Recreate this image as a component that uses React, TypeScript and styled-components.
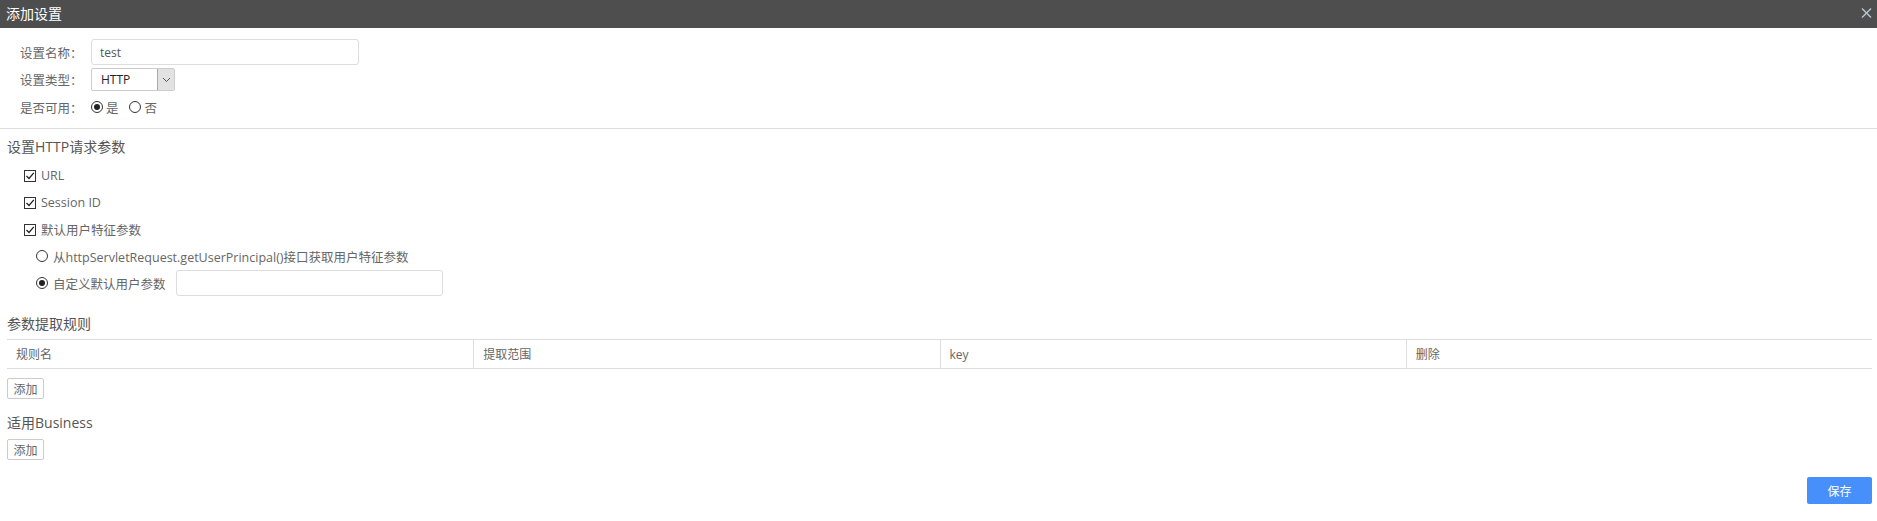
import React from "react";
import styled, { createGlobalStyle } from "styled-components";

const Global = createGlobalStyle`
  html, body { margin: 0; padding: 0; background: #fff; }
  body { font-family: "Open Sans", "Noto Sans CJK SC", sans-serif; font-size: 12px; color: #666; }
  * { box-sizing: border-box; }
`;

const Header = styled.div`
  height: 28px;
  background: #4e4e4e;
  display: flex;
  align-items: center;
  justify-content: space-between;
  padding: 0 5px 0 6px;
`;
const Title = styled.div`
  color: #fff;
  font-size: 14px;
  line-height: 28px;
`;
const Close = styled.button`
  border: 0;
  background: none;
  padding: 0;
  width: 12px;
  height: 12px;
  display: flex;
  align-items: center;
  justify-content: center;
  margin-top: -2px;
`;

const FormBlock = styled.div`
  padding: 11px 0 0 20px;
  display: flex;
  flex-direction: column;
  gap: 3px;
`;
const FormRow = styled.div<{ $h: number }>`
  display: flex;
  align-items: center;
  height: ${(p) => p.$h}px;
`;
const Label = styled.span`
  width: 71px;
  color: #666;
  font-size: 12.5px;
`;
const TextInput = styled.div<{ $w: number }>`
  width: ${(p) => p.$w}px;
  height: 26px;
  border: 1px solid #ddd;
  border-radius: 3px;
  padding-left: 8px;
  display: flex;
  align-items: center;
  color: #555;
  font-size: 12px;
`;
const Select = styled.div`
  width: 84px;
  height: 23px;
  border: 1px solid #ccc;
  border-radius: 2px;
  display: flex;
  align-items: stretch;
`;
const SelectValue = styled.span`
  flex: 1;
  display: flex;
  align-items: center;
  padding-left: 9px;
  color: #222;
  font-size: 12px;
`;
const SelectArrow = styled.span`
  width: 17px;
  background: #e2e2e2;
  border-left: 1px solid #aaa;
  display: flex;
  align-items: center;
  justify-content: center;
`;

const RadioDot = styled.span<{ $on?: boolean }>`
  width: 12px;
  height: 12px;
  border: 1px solid #333;
  border-radius: 50%;
  display: inline-flex;
  align-items: center;
  justify-content: center;
  flex-shrink: 0;
  &::after {
    content: "";
    width: 6px;
    height: 6px;
    border-radius: 50%;
    background: ${(p) => (p.$on ? "#222" : "transparent")};
  }
`;
const Choice = styled.label<{ $gap: number; $ml?: number }>`
  display: inline-flex;
  align-items: center;
  gap: ${(p) => p.$gap}px;
  margin-left: ${(p) => p.$ml ?? 0}px;
  color: #666;
  font-size: 12.5px;
`;

const Divider = styled.div`
  height: 1px;
  background: #ddd;
  margin-top: 8px;
`;

const Content = styled.div`
  padding: 0 5px 0 7px;
  display: flex;
  flex-direction: column;
`;
const SectionTitle = styled.div<{ $mt: number }>`
  font-size: 14px;
  line-height: 20px;
  color: #555;
  margin-top: ${(p) => p.$mt}px;
`;
const CheckList = styled.div`
  margin-top: 5px;
  padding-left: 17px;
  display: flex;
  flex-direction: column;
`;
const CheckRow = styled.div`
  height: 27px;
  display: flex;
  align-items: center;
  gap: 5px;
  color: #666;
  font-size: 12.5px;
`;
const CheckBox = styled.span`
  width: 12px;
  height: 12px;
  border: 1px solid #333;
  display: inline-flex;
  align-items: center;
  justify-content: center;
`;
const SubRow = styled.div<{ $h: number }>`
  height: ${(p) => p.$h}px;
  display: flex;
  align-items: center;
  padding-left: 12px;
  gap: 10px;
`;

const Table = styled.div`
  margin-top: 5px;
  display: grid;
  grid-template-columns: repeat(4, 1fr);
  border-top: 1px solid #ddd;
  border-bottom: 1px solid #ddd;
`;
const HeadCell = styled.div<{ $first?: boolean }>`
  height: 28px;
  display: flex;
  align-items: center;
  padding-left: 9px;
  border-left: ${(p) => (p.$first ? "none" : "1px solid #ddd")};
  color: #666;
  font-size: 12px;
`;
const SmallButton = styled.button<{ $mt: number }>`
  align-self: flex-start;
  margin-top: ${(p) => p.$mt}px;
  width: 37px;
  height: 21px;
  border: 1px solid #ccc;
  border-radius: 2px;
  background: #fff;
  color: #666;
  font-family: inherit;
  font-size: 12px;
  padding: 0;
`;
const Footer = styled.div`
  display: flex;
  justify-content: flex-end;
  margin-top: 17px;
`;
const SaveButton = styled.button`
  width: 65px;
  height: 27px;
  border: 0;
  border-radius: 2px;
  background: #478ffa;
  color: #fff;
  font-family: inherit;
  font-size: 12px;
  padding: 0;
`;

const Check = () => (
  <svg width="10" height="10" viewBox="0 0 10 10">
    <path d="M1.5 5 L4 7.5 L8.8 1.8" fill="none" stroke="#222" strokeWidth="1.3" />
  </svg>
);

export default function App() {
  return (
    <>
      <Global />
      <Header>
        <Title>添加设置</Title>
        <Close aria-label="close">
          <svg width="11" height="10" viewBox="0 0 11 10">
            <path d="M1 0.5 L10 9.5 M10 0.5 L1 9.5" stroke="#b9c6d2" strokeWidth="1.4" />
          </svg>
        </Close>
      </Header>
      <FormBlock>
        <FormRow $h={26}>
          <Label>设置名称：</Label>
          <TextInput $w={268}>test</TextInput>
        </FormRow>
        <FormRow $h={23}>
          <Label>设置类型：</Label>
          <Select>
            <SelectValue>HTTP</SelectValue>
            <SelectArrow>
              <svg width="9" height="6" viewBox="0 0 9 6">
                <path d="M1 1 L4.5 4.5 L8 1" fill="none" stroke="#555" strokeWidth="1" />
              </svg>
            </SelectArrow>
          </Select>
        </FormRow>
        <FormRow $h={26}>
          <Label>是否可用：</Label>
          <Choice $gap={3}>
            <RadioDot $on />是
          </Choice>
          <Choice $gap={4} $ml={10}>
            <RadioDot />否
          </Choice>
        </FormRow>
      </FormBlock>
      <Divider />
      <Content>
        <SectionTitle $mt={8}>设置HTTP请求参数</SectionTitle>
        <CheckList>
          <CheckRow>
            <CheckBox><Check /></CheckBox>URL
          </CheckRow>
          <CheckRow>
            <CheckBox><Check /></CheckBox>Session ID
          </CheckRow>
          <CheckRow>
            <CheckBox><Check /></CheckBox>默认用户特征参数
          </CheckRow>
          <SubRow $h={26}>
            <Choice $gap={5}>
              <RadioDot />从httpServletRequest.getUserPrincipal()接口获取用户特征参数
            </Choice>
          </SubRow>
          <SubRow $h={28}>
            <Choice $gap={5}>
              <RadioDot $on />自定义默认用户参数
            </Choice>
            <TextInput $w={267} />
          </SubRow>
        </CheckList>
        <SectionTitle $mt={17}>参数提取规则</SectionTitle>
        <Table>
          <HeadCell $first>规则名</HeadCell>
          <HeadCell>提取范围</HeadCell>
          <HeadCell>key</HeadCell>
          <HeadCell>删除</HeadCell>
        </Table>
        <SmallButton $mt={9}>添加</SmallButton>
        <SectionTitle $mt={14}>适用Business</SectionTitle>
        <SmallButton $mt={6}>添加</SmallButton>
        <Footer>
          <SaveButton>保存</SaveButton>
        </Footer>
      </Content>
    </>
  );
}
